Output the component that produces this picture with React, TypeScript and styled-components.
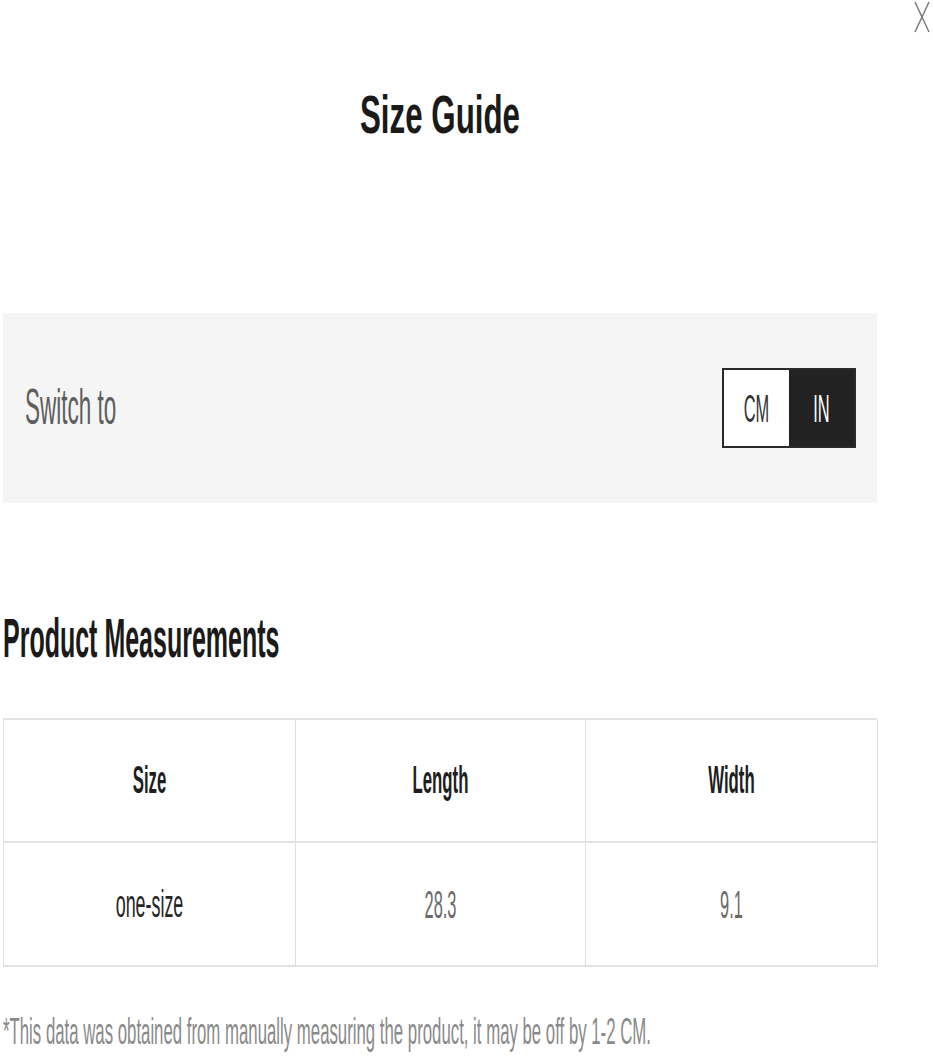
import React from "react";
import styled, { createGlobalStyle } from "styled-components";

const Global = createGlobalStyle`
  html, body {
    margin: 0;
    padding: 0;
    background: #ffffff;
  }
  body {
    font-family: "Liberation Sans", Arial, sans-serif;
  }
`;

const Page = styled.div`
  position: relative;
  width: 933px;
  height: 1058px;
  box-sizing: border-box;
  padding: 100px 56px 0 3px;
  display: flex;
  flex-direction: column;
`;

/* The reference text is tall and narrow: a small font stretched vertically. */
const Stretch = styled.span<{ $sy: number }>`
  display: inline-block;
  white-space: nowrap;
  transform: scaleY(${(p) => p.$sy});
  transform-origin: center center;
`;

const CloseButton = styled.button`
  position: absolute;
  top: 1px;
  right: 2px;
  width: 18px;
  height: 32px;
  padding: 0;
  border: none;
  background: transparent;
  cursor: pointer;
  display: flex;
  align-items: center;
  justify-content: center;
`;

const Title = styled.h1`
  margin: 0;
  font-size: 31.3px;
  line-height: 32px;
  font-weight: 700;
  color: #1a1a1a;
  text-align: center;
`;

const SwitchBar = styled.div`
  margin-top: 181px;
  height: 190px;
  background: #f5f5f5;
  display: flex;
  align-items: center;
  justify-content: space-between;
  padding: 0 21px 0 22px;
`;

const SwitchLabel = styled.div`
  font-size: 22.5px;
  line-height: 24px;
  color: #5e5e5e;
`;

const Toggle = styled.div`
  display: flex;
  border: 2px solid #2a2a2a;
`;

const ToggleOption = styled.button<{ $active?: boolean }>`
  width: 65px;
  height: 76px;
  border: none;
  padding: 0;
  margin: 0;
  display: flex;
  align-items: center;
  justify-content: center;
  font-family: "Liberation Sans", Arial, sans-serif;
  font-size: 16.4px;
  line-height: 18px;
  background: ${(p) => (p.$active ? "#222222" : "#ffffff")};
  color: ${(p) => (p.$active ? "#ffffff" : "#333333")};
`;

const SectionTitle = styled.h2`
  margin: 121px 0 0 0;
  font-size: 25px;
  line-height: 26px;
  font-weight: 700;
  color: #1a1a1a;
`;

const Table = styled.div`
  margin-top: 68px;
  display: grid;
  grid-template-columns: 292px 290px 292px;
  grid-template-rows: 123px 124px;
  border-top: 2px solid #e2e2e2;
  border-left: 1px solid #e0e0e0;
`;

const Cell = styled.div<{ $header?: boolean; $strong?: boolean }>`
  box-sizing: border-box;
  display: flex;
  align-items: center;
  justify-content: center;
  border-right: 1px solid #e0e0e0;
  border-bottom: 2px solid #e2e2e2;
  font-size: ${(p) => (p.$header ? "16.8px" : p.$strong ? "17.9px" : "16.4px")};
  line-height: 18px;
  font-weight: ${(p) => (p.$header ? 700 : 400)};
  color: ${(p) => (p.$header ? "#1e1e1e" : p.$strong ? "#262626" : "#6a6a6a")};
`;

const Note = styled.p`
  margin: 57px 0 0 0;
  font-size: 16.8px;
  line-height: 18px;
  color: #8a8a8a;
`;

export default function App() {
  return (
    <>
      <Global />
      <Page>
        <CloseButton aria-label="Close">
          <svg width="16" height="32" viewBox="0 0 16 32">
            <line x1="1" y1="1" x2="15" y2="31" stroke="#7a7a7a" strokeWidth="1.5" />
            <line x1="15" y1="1" x2="1" y2="31" stroke="#7a7a7a" strokeWidth="1.5" />
          </svg>
        </CloseButton>
        <Title>
          <Stretch $sy={1.724}>Size Guide</Stretch>
        </Title>
        <SwitchBar>
          <SwitchLabel>
            <Stretch $sy={2.222}>Switch to</Stretch>
          </SwitchLabel>
          <Toggle>
            <ToggleOption>
              <Stretch $sy={2.326}>CM</Stretch>
            </ToggleOption>
            <ToggleOption $active>
              <Stretch $sy={2.326}>IN</Stretch>
            </ToggleOption>
          </Toggle>
        </SwitchBar>
        <SectionTitle>
          <Stretch $sy={2.198}>Product Measurements</Stretch>
        </SectionTitle>
        <Table>
          <Cell $header><Stretch $sy={2.326}>Size</Stretch></Cell>
          <Cell $header><Stretch $sy={2.326}>Length</Stretch></Cell>
          <Cell $header><Stretch $sy={2.326}>Width</Stretch></Cell>
          <Cell $strong><Stretch $sy={2.174}>one-size</Stretch></Cell>
          <Cell><Stretch $sy={2.381}>28.3</Stretch></Cell>
          <Cell><Stretch $sy={2.381}>9.1</Stretch></Cell>
        </Table>
        <Note>
          <Stretch $sy={2.208}>
            *This data was obtained from manually measuring the product, it may be off by 1-2 CM.
          </Stretch>
        </Note>
      </Page>
    </>
  );
}
